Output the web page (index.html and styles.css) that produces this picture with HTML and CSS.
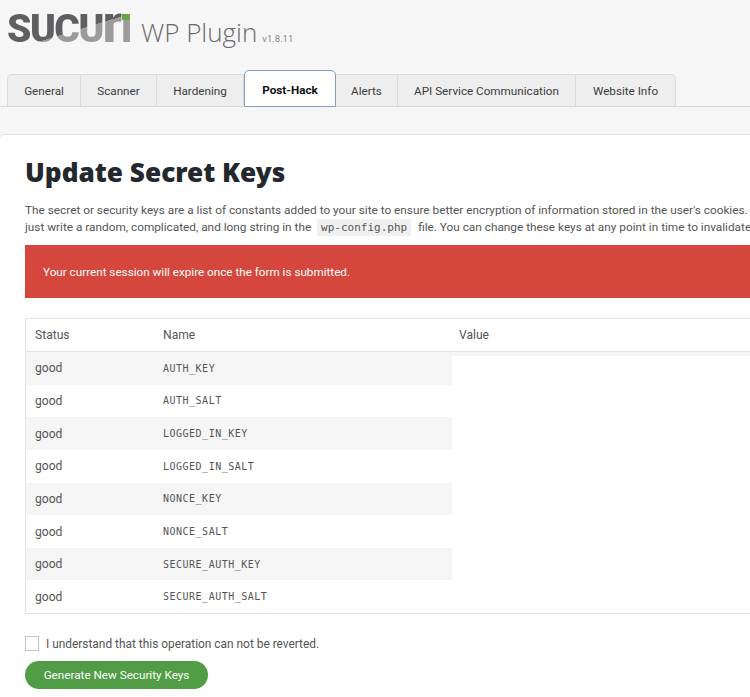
FILE: index.html
```html
<!DOCTYPE html>
<html lang="en">
  <head>
    <meta charset="UTF-8" />
    <title>Sucuri WP Plugin</title>
    <link rel="stylesheet" href="styles.css">
  </head>
  <body>
    <div class="page">
      <div class="header">
        <span class="logo">SUCU<span class="logo-r">r</span>I<span class="logo-dot"></span></span>
        <span class="plugin-name">WP Plugin</span>
        <span class="version">v1.8.11</span>
      </div>

      <div class="tabs">
        <a class="tab tab-general">General</a>
        <a class="tab tab-scanner">Scanner</a>
        <a class="tab tab-hardening">Hardening</a>
        <a class="tab tab-active">Post-Hack</a>
        <a class="tab tab-alerts">Alerts</a>
        <a class="tab tab-api">API Service Communication</a>
        <a class="tab tab-info">Website Info</a>
      </div>

      <div class="card">
        <h1>Update Secret Keys</h1>
        <p class="intro">The secret or security keys are a list of constants added to your site to ensure better encryption of information stored in the user's cookies.<br>just write a random, complicated, and long string in the <code>wp-config.php</code> file. You can change these keys at any point in time to invalidate</p>

        <div class="alert">Your current session will expire once the form is submitted.</div>

        <div class="table-wrap">
          <table class="keys">
            <thead>
              <tr><th class="col-status">Status</th><th class="col-name">Name</th><th>Value</th></tr>
            </thead>
            <tbody>
              <tr><td>good</td><td class="key">AUTH_KEY</td><td></td></tr>
              <tr><td>good</td><td class="key">AUTH_SALT</td><td></td></tr>
              <tr><td>good</td><td class="key">LOGGED_IN_KEY</td><td></td></tr>
              <tr><td>good</td><td class="key">LOGGED_IN_SALT</td><td></td></tr>
              <tr><td>good</td><td class="key">NONCE_KEY</td><td></td></tr>
              <tr><td>good</td><td class="key">NONCE_SALT</td><td></td></tr>
              <tr><td>good</td><td class="key">SECURE_AUTH_KEY</td><td></td></tr>
              <tr><td>good</td><td class="key">SECURE_AUTH_SALT</td><td></td></tr>
            </tbody>
          </table>
          <div class="value-mask"></div>
        </div>

        <label class="confirm"><span class="checkbox"></span>I understand that this operation can not be reverted.</label>
        <button class="btn-generate">Generate New Security Keys</button>
      </div>
    </div>
  </body>
</html>
```

FILE: styles.css
```css
html,
body {
  margin: 0;
  padding: 0;
  background: #f6f6f6;
}
body {
  font-family: Roboto, "Noto Sans", sans-serif;
  color: #555;
}
.page {
  width: 750px;
  height: 697px;
  overflow: hidden;
}

/* header */
.header {
  display: flex;
  align-items: baseline;
  height: 74px;
  padding-left: 7px;
  box-sizing: border-box;
  padding-top: 6px;
}
.logo {
  position: relative;
  display: inline-block;
  width: 123px;
  font-family: Roboto, sans-serif;
  font-weight: 900;
  font-size: 39px;
  line-height: 38px;
  letter-spacing: -1.5px;
  white-space: nowrap;
  background: linear-gradient(163deg, #5f5f61 0 57%, #9b9b9b 57% 100%);
  -webkit-background-clip: text;
  background-clip: text;
  color: transparent;
}
.logo-r {
  font-size: 51px;
  line-height: 38px;
}
.logo-dot {
  position: absolute;
  right: 0;
  top: 8px;
  width: 8px;
  height: 6px;
  background: #6ea544;
}
.plugin-name {
  margin-left: 11px;
  font-family: "Open Sans", sans-serif;
  font-weight: 300;
  font-size: 26px;
  line-height: 36px;
  color: #6b6b6b;
}
.version {
  margin-left: 5px;
  font-size: 9.5px;
  color: #888;
}

/* tabs */
.tabs {
  display: flex;
  align-items: flex-end;
  height: 32px;
  padding-left: 7px;
  border-bottom: 1px solid #d8d8d8;
}
.tab {
  box-sizing: border-box;
  height: 32px;
  line-height: 32px;
  text-align: center;
  font-size: 11.7px;
  color: #3c3c3c;
  background: #eeeeee;
  border: 1px solid #dcdcdc;
  border-left: 0;
  border-bottom: 0;
}
.tab-general {
  width: 74px;
  border-left: 1px solid #dcdcdc;
  border-top-left-radius: 5px;
}
.tab-scanner {
  width: 76px;
}
.tab-hardening {
  width: 87px;
}
.tab-active {
  width: 92px;
  height: 37px;
  line-height: 39px;
  margin-bottom: -1px;
  background: #fff;
  color: #111;
  font-weight: 700;
  border: 1px solid #7f9fc4;
  border-radius: 5px 5px 0 0;
}
.tab-alerts {
  width: 62px;
}
.tab-api {
  width: 178px;
}
.tab-info {
  width: 100px;
  border-top-right-radius: 5px;
}

/* card */
.card {
  width: 1000px;
  margin-top: 27px;
  padding: 1px 0 0 25px;
  height: 600px;
  background: #fff;
  border-top: 1px solid #e2e2e2;
  border-top-left-radius: 5px;
}
h1 {
  margin: 18px 0 0;
  font-family: "Noto Sans", sans-serif;
  font-weight: 900;
  font-size: 26.2px;
  line-height: 37px;
  color: #23282d;
}
.intro {
  margin: 11px 0 0;
  font-size: 11.8px;
  line-height: 17px;
  white-space: nowrap;
}
code {
  margin: 0 4px 0 3px;
  padding: 2px 4px;
  background: #f0f0f0;
  font-family: "DejaVu Sans Mono", monospace;
  font-size: 11px;
}
.alert {
  margin-top: 9px;
  height: 53px;
  padding-left: 18px;
  line-height: 55px;
  font-size: 11.7px;
  background: #d5473d;
  color: #fff;
}

/* table */
.table-wrap {
  position: relative;
  margin-top: 20px;
}
.keys {
  width: 100%;
  border-collapse: collapse;
  border: 1px solid #e3e3e3;
  font-size: 12.1px;
}
.keys th {
  height: 32px;
  padding: 0 0 0 9px;
  text-align: left;
  font-weight: 400;
  border-bottom: 1px solid #e3e3e3;
}
.keys td {
  height: 32.65px;
  padding: 0 0 0 9px;
}
.keys tbody tr:nth-child(odd) {
  background: #f5f5f5;
}
.col-status {
  width: 119px;
}
.col-name {
  width: 287px;
}
.keys td.key {
  font-family: "DejaVu Sans Mono", monospace;
  font-size: 10px;
  letter-spacing: 0.5px;
}
.value-mask {
  position: absolute;
  left: 427px;
  top: 38px;
  right: 1px;
  bottom: 1px;
  background: #fff;
}

/* form */
.confirm {
  display: flex;
  align-items: center;
  margin-top: 22px;
  font-size: 11.9px;
}
.checkbox {
  box-sizing: border-box;
  width: 14px;
  height: 15px;
  margin-right: 7px;
  border: 1px solid #c4c4c4;
  background: #fff;
}
.btn-generate {
  display: block;
  width: 183px;
  height: 28px;
  margin-top: 10px;
  padding: 0;
  border: none;
  border-radius: 14px;
  background: #509d45;
  color: #fff;
  font-family: Roboto, sans-serif;
  font-size: 11.7px;
}
```
